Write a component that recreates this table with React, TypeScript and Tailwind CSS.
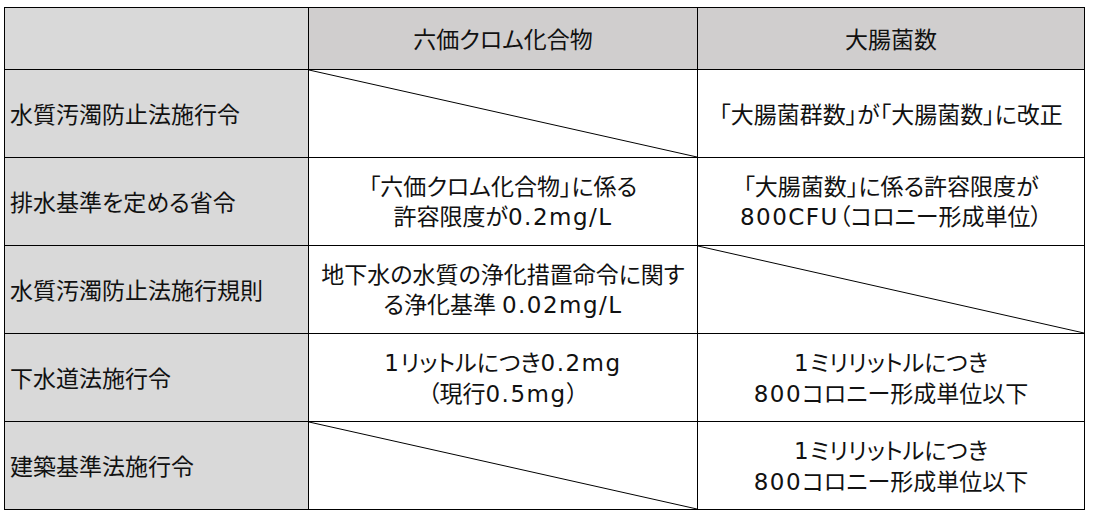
import React from "react"

type Cell = { text?: string[]; diag?: boolean }

const rows: { label: string; cells: [Cell, Cell] }[] = [
  {
    label: "水質汚濁防止法施行令",
    cells: [{ diag: true }, { text: ["「大腸菌群数」が「大腸菌数」に改正"] }],
  },
  {
    label: "排水基準を定める省令",
    cells: [
      { text: ["「六価クロム化合物」に係る", "許容限度が0.2mg/L"] },
      { text: ["「大腸菌数」に係る許容限度が", "800CFU（コロニー形成単位）"] },
    ],
  },
  {
    label: "水質汚濁防止法施行規則",
    cells: [
      { text: ["地下水の水質の浄化措置命令に関す", "る浄化基準 0.02mg/L"] },
      { diag: true },
    ],
  },
  {
    label: "下水道法施行令",
    cells: [
      { text: ["1リットルにつき0.2mg", "（現行0.5mg）"] },
      { text: ["1ミリリットルにつき", "800コロニー形成単位以下"] },
    ],
  },
  {
    label: "建築基準法施行令",
    cells: [{ diag: true }, { text: ["1ミリリットルにつき", "800コロニー形成単位以下"] }],
  },
]

// 英数字だけ幅広のフォントにする
function Mixed({ text }: { text: string }) {
  const parts = text.split(/([0-9A-Za-z./]+)/)
  return (
    <>
      {parts.map((p, i) =>
        /[0-9A-Za-z]/.test(p) ? (
          <span key={i} className="tracking-[1.5px] font-['DejaVu_Sans',sans-serif]">
            {p}
          </span>
        ) : (
          <React.Fragment key={i}>{p}</React.Fragment>
        )
      )}
    </>
  )
}

function Diagonal() {
  return (
    <svg className="absolute inset-0 h-full w-full" preserveAspectRatio="none" viewBox="0 0 100 100">
      <line x1="0" y1="0" x2="100" y2="100" stroke="#000" strokeWidth="1" vectorEffect="non-scaling-stroke" />
    </svg>
  )
}

export default function App() {
  return (
    <div
      className="min-h-screen bg-white pl-[4px] pt-[7px] text-[23px] leading-[30px] text-[#111] [font-feature-settings:'palt']"
      style={{ fontFamily: '"Open Sans", "Noto Sans CJK JP", sans-serif' }}
    >
      <div className="grid w-[1081px] grid-cols-[303px_388px_386px] grid-rows-[61px_repeat(5,87px)] gap-px bg-black p-px">
        <div className="bg-[#d9d9d9]" />
        <div className="flex items-center justify-center bg-[#d0cece]">六価クロム化合物</div>
        <div className="flex items-center justify-center bg-[#d0cece]">大腸菌数</div>

        {rows.map((row) => (
          <React.Fragment key={row.label}>
            <div className="flex items-center bg-[#d9d9d9] pl-[5px]">{row.label}</div>
            {row.cells.map((cell, i) => (
              <div key={i} className="relative flex flex-col items-center justify-center bg-white text-center">
                {cell.diag && <Diagonal />}
                {cell.text?.map((line) => (
                  <span key={line} className="whitespace-nowrap">
                    <Mixed text={line} />
                  </span>
                ))}
              </div>
            ))}
          </React.Fragment>
        ))}
      </div>
    </div>
  )
}
